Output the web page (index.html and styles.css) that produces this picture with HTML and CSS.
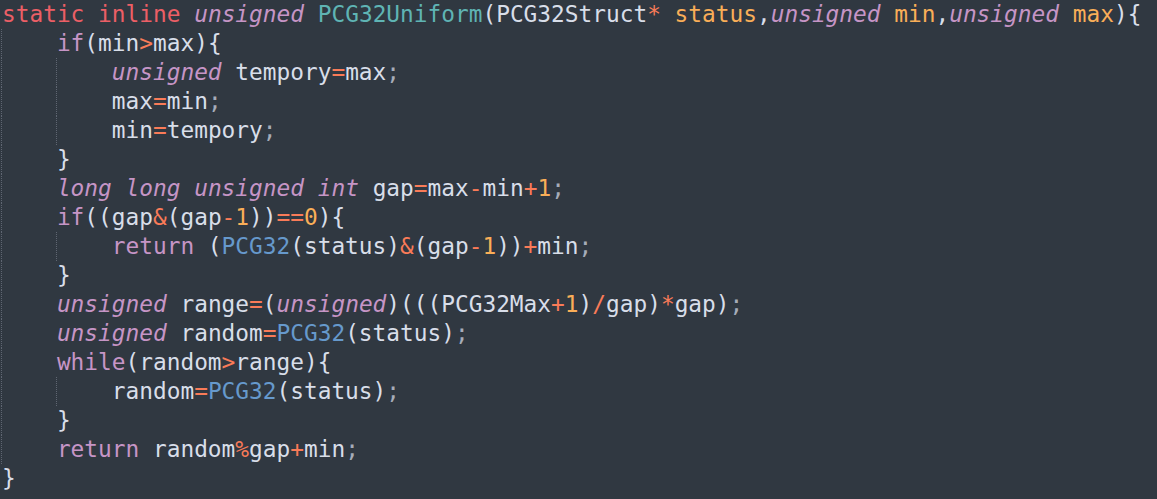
FILE: index.html
```html
<!DOCTYPE html>
<html>
<head>
<meta charset="utf-8">
<link rel="stylesheet" href="styles.css">
</head>
<body>
<div class="code">
<div class="line"><span class="st">static</span> <span class="st">inline</span> <span class="ty">unsigned</span> <span class="fn">PCG32Uniform</span>(PCG32Struct<span class="op">*</span> <span class="pa">status</span>,<span class="ty">unsigned</span> <span class="pa">min</span>,<span class="ty">unsigned</span> <span class="pa">max</span>){</div>
<div class="line"><span class="ind"></span><span class="kw">if</span>(min<span class="op">&gt;</span>max){</div>
<div class="line"><span class="ind"></span><span class="ind"></span><span class="ty">unsigned</span> tempory<span class="op">=</span>max<span class="pu">;</span></div>
<div class="line"><span class="ind"></span><span class="ind"></span>max<span class="op">=</span>min<span class="pu">;</span></div>
<div class="line"><span class="ind"></span><span class="ind"></span>min<span class="op">=</span>tempory<span class="pu">;</span></div>
<div class="line"><span class="ind"></span>}</div>
<div class="line"><span class="ind"></span><span class="ty">long</span> <span class="ty">long</span> <span class="ty">unsigned</span> <span class="ty">int</span> gap<span class="op">=</span>max<span class="op">-</span>min<span class="op">+</span><span class="nu">1</span><span class="pu">;</span></div>
<div class="line"><span class="ind"></span><span class="kw">if</span>((gap<span class="op">&amp;</span>(gap<span class="op">-</span><span class="nu">1</span>))<span class="op">==</span><span class="nu">0</span>){</div>
<div class="line"><span class="ind"></span><span class="ind"></span><span class="kw">return</span> (<span class="fc">PCG32</span>(status)<span class="op">&amp;</span>(gap<span class="op">-</span><span class="nu">1</span>))<span class="op">+</span>min<span class="pu">;</span></div>
<div class="line"><span class="ind"></span>}</div>
<div class="line"><span class="ind"></span><span class="ty">unsigned</span> range<span class="op">=</span>(<span class="ty">unsigned</span>)(((PCG32Max<span class="op">+</span><span class="nu">1</span>)<span class="op">/</span>gap)<span class="op">*</span>gap)<span class="pu">;</span></div>
<div class="line"><span class="ind"></span><span class="ty">unsigned</span> random<span class="op">=</span><span class="fc">PCG32</span>(status)<span class="pu">;</span></div>
<div class="line"><span class="ind"></span><span class="kw">while</span>(random<span class="op">&gt;</span>range){</div>
<div class="line"><span class="ind"></span><span class="ind"></span>random<span class="op">=</span><span class="fc">PCG32</span>(status)<span class="pu">;</span></div>
<div class="line"><span class="ind"></span>}</div>
<div class="line"><span class="ind"></span><span class="kw">return</span> random<span class="op">%</span>gap<span class="op">+</span>min<span class="pu">;</span></div>
<div class="line">}</div>
</div>
</body>
</html>
```
FILE: styles.css
```css
html, body {
  margin: 0;
  padding: 0;
  background: #303841;
}

.code {
  padding-left: 2px;
  font-family: "DejaVu Sans Mono", monospace;
  font-size: 22.8px;
  color: #d8dee9;
  background: #303841;
  height: 499px;
  overflow: hidden;
}

.line {
  height: 29px;
  line-height: 29px;
  white-space: pre;
}

.ind {
  display: inline-block;
  box-sizing: border-box;
  width: 4ch;
  height: 29px;
  vertical-align: top;
  border-left: 1px dotted #5f6672;
  margin-left: -1px;
  margin-right: 1px;
}

.st { color: #ec5f66; }
.ty { color: #c695c6; font-style: italic; }
.kw { color: #c695c6; }
.fn { color: #5fb4b4; }
.fc { color: #6699cc; }
.pa { color: #f9ae58; }
.op { color: #f97b58; }
.nu { color: #f9ae58; }
.pu { color: #a6acb9; }
```
